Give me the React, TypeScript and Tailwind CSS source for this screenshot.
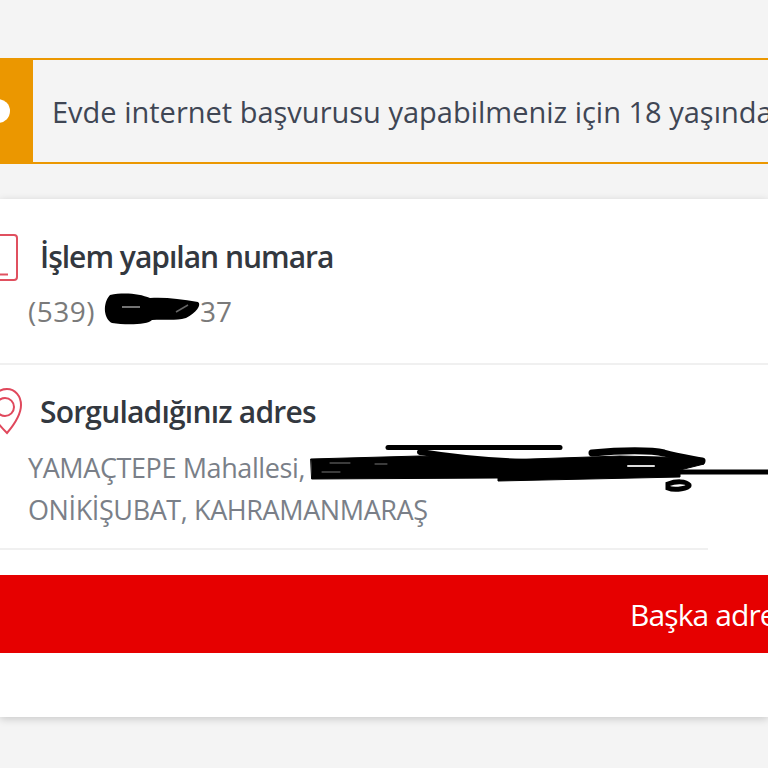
const sans = "font-['Open_Sans','Noto_Sans',sans-serif]";

function PhoneIcon() {
  return (
    <svg width="30" height="50" viewBox="0 0 30 50" fill="none" stroke="#e0505f" strokeWidth="2" className="shrink-0">
      <rect x="-20" y="3" width="37" height="45" rx="3" />
      <path d="M0 42.5h8" strokeWidth="2" />
    </svg>
  );
}

function PinIcon() {
  return (
    <svg width="30" height="50" viewBox="0 0 30 50" fill="none" stroke="#e0485c" strokeWidth="2" className="shrink-0">
      <path d="M7 46 C1 40 -9 30 -9 19 C-9 9 -2 2 7 2 C15 2 21 9 21 18 C21 28 13 39 7 46Z" />
      <circle cx="5" cy="20" r="9" />
    </svg>
  );
}

function PhoneScribble() {
  return (
    <svg width="105" height="40" viewBox="100 290 105 40" className="absolute left-[72px] top-[-2px]">
      <path d="M110 296 C125 293 140 295 150 299 C165 298 180 300 198 303 C202 306 196 314 186 319 C175 322 165 320 152 321 C148 326 125 326 112 324 C104 320 102 305 110 296Z" fill="#000" />
      <path d="M122 308h18" stroke="#9a9a9a" strokeWidth="1.5" />
      <path d="M176 313l12-7" stroke="#666" strokeWidth="1.5" />
    </svg>
  );
}

function AddressScribble() {
  return (
    <svg width="468" height="55" viewBox="300 440 468 55" fill="none" stroke="#000" strokeLinecap="round" className="absolute left-[272px] top-[-7px]">
      <path d="M388 447.5h172" strokeWidth="5" />
      {/* solid band, left side thinner than the right */}
      <path d="M311 459L420 456L500 460L620 456L700 458L704 464L680 470L680 477L498 481L498 478L312 479Z" fill="#000" />
      <path d="M420 452c50 8 110 12 170 10" strokeWidth="6" />
      <path d="M592 453c30-3 60-3 72 0 14 4 28 6 38 8" strokeWidth="7" />
      <path d="M680 472h88" strokeWidth="5" strokeLinecap="butt" />
      <path d="M668 484c8-3 18-3 21 1 1 3-14 6-21 3z" strokeWidth="5" />
      <path d="M375 464h12M330 463h20M322 472h18" stroke="#777" strokeWidth="1" />
      <path d="M628 466h26" stroke="#ddd" strokeWidth="2" />
    </svg>
  );
}

export default function App() {
  return (
    <div className={`${sans} h-[768px] w-[768px] overflow-hidden bg-[#f4f4f4] pt-[58px]`}>
      {/* alert */}
      <div className="flex h-[106px] w-[900px] border-y-2 border-[#eb9700]">
        <div className="flex w-[33px] shrink-0 items-center bg-[#eb9700]">
          <div className="ml-[-14px] h-[24px] w-[24px] rounded-full bg-white" />
        </div>
        <div className="flex flex-1 items-center whitespace-nowrap pl-[19px] pt-[2px] text-[29px] text-[#3f4654]">
          Evde internet başvurusu yapabilmeniz için 18 yaşından büyük olmalısınız.
        </div>
      </div>

      {/* card */}
      <div className="mt-[35px] h-[518px] bg-white pt-[33px] shadow-[0_2px_8px_rgba(0,0,0,0.18)]">
        <div className="h-[133px] border-b-2 border-[#f0f0f0]">
          <div className="flex items-center">
            <PhoneIcon />
            <div className="ml-[10px] text-[30px] font-semibold leading-[50px] tracking-[-1px] text-[#33383f]">İşlem yapılan numara</div>
          </div>
          <div className="relative ml-[28px] mt-[9px] text-[28px] leading-[40px] text-[#7a7a7a]">
            <span className="tracking-[0.5px]">(539)</span>
            <PhoneScribble />
            <span className="ml-[105px]">37</span>
          </div>
        </div>

        <div className="mr-[60px] h-[185px] border-b-2 border-[#f0f0f0] pt-[22px]">
          <div className="flex items-center">
            <PinIcon />
            <div className="ml-[10px] text-[30px] font-semibold leading-[50px] tracking-[-0.8px] text-[#33383f]">Sorguladığınız adres</div>
          </div>
          <div className="relative ml-[28px] mt-[10px] whitespace-nowrap text-[27px] leading-[42px] tracking-[-0.4px] text-[#7a7f88]">
            <div>YAMAÇTEPE Mahallesi,</div>
            <AddressScribble />
            <div>ONİKİŞUBAT, KAHRAMANMARAŞ</div>
          </div>
        </div>

        <div className="mt-[25px] flex h-[78px] w-[768px] items-center whitespace-nowrap bg-[#e60000] pl-[630px] text-[30px] tracking-[-0.9px] text-white">
          Başka adres sorgula
        </div>
      </div>
    </div>
  );
}
